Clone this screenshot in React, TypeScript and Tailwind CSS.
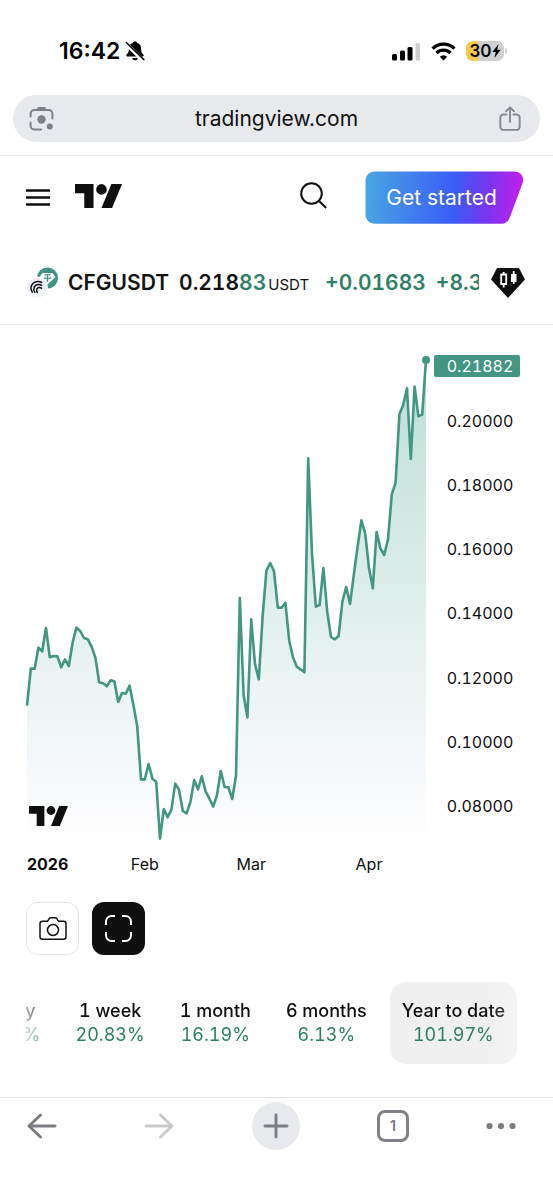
import React from "react";

// Daily closes, as plot heights below the top of the pane (1515 units tall, see viewBox).
const series = [
  1097, 986, 986, 923, 934, 864, 952, 948, 949, 982, 958, 978, 908, 863, 873, 894, 898, 920, 953, 1027, 1030, 1039,
  1021, 1024, 1086, 1059, 1061, 1037, 1095, 1158, 1318, 1318, 1272, 1316, 1325, 1496, 1407, 1432, 1409, 1331, 1349,
  1413, 1420, 1386, 1320, 1348, 1309, 1354, 1376, 1400, 1365, 1293, 1341, 1342, 1377, 1307, 774, 1065, 1132, 838, 972,
  1018, 830, 692, 669, 694, 803, 803, 788, 902, 952, 980, 988, 997, 355, 640, 800, 795, 684, 815, 891, 898, 888, 785,
  741, 792, 705, 620, 541, 580, 685, 745, 576, 625, 645, 598, 463, 428, 223, 195, 145, 357, 140, 229, 224, 60,
];

const lastDay = series.length - 1;
const linePoints = series.map((y, day) => `${day * 10},${y}`).join(" ");
const areaPoints = `0,1515 ${linePoints} ${lastDay * 10},1515`;

const months = [
  { label: "Feb", day: 31 },
  { label: "Mar", day: 59 },
  { label: "Apr", day: 90 },
];

const prices = ["0.20000", "0.18000", "0.16000", "0.14000", "0.12000", "0.10000", "0.08000"];

const ranges = [
  { label: "1 day", change: "8.34%" },
  { label: "1 week", change: "20.83%" },
  { label: "1 month", change: "16.19%" },
  { label: "6 months", change: "6.13%" },
  { label: "Year to date", change: "101.97%", active: true },
];

function BrandMark({ className }: { className: string }) {
  return (
    <svg viewBox="0 4 35.5 18" className={className} fill="#0f0f0f" aria-hidden="true">
      <path d="M14 22H7V11H0V4h14v18ZM28 22h-8l7.5-18h8L28 22Z" />
      <circle cx="20" cy="8" r="4" />
    </svg>
  );
}

function StatusBar() {
  return (
    <div className="flex h-[95px] items-center justify-between pt-[7px] pr-[46px] pl-[59px]">
      <div className="flex items-center gap-[5px]">
        <span className="text-[23px] leading-7 font-semibold text-black">16:42</span>
        <svg viewBox="0 0 20 20" className="h-5 w-5" aria-hidden="true">
          <path
            d="M10 .6c1.5 0 2 .7 2.2 1.3 2.6.8 3.9 2.900 3.900 5.600 0 4 1.200 5 2.400 6.200.5.7.2 1.800-.8 1.800H2.300c-1 0-1.300-1.100-.8-1.800C2.700 12.500 3.900 11.500 3.900 7.500c0-2.700 1.300-4.800 3.900-5.600C8 1.300 8.500.6 10 .6Z"
            fill="#000"
          />
          <path d="M7.200 17h5.600c-.3 1.500-1.400 2.300-2.800 2.300S7.500 18.500 7.200 17Z" fill="#000" />
          <path d="M1 2.400 18.200 19.600" stroke="#fff" strokeWidth="4" />
          <path d="M1.300 1.500 18.900 18.600" stroke="#000" strokeWidth="1.500" strokeLinecap="round" />
        </svg>
      </div>
      <div className="flex items-center gap-[10px]">
        <svg viewBox="0 0 30 19" className="h-[19px] w-[30px]" aria-hidden="true">
          <rect x="1" y="12" width="5" height="6.500" rx="1.500" />
          <rect x="9" y="8.500" width="5" height="10" rx="1.500" />
          <rect x="16.500" y="5" width="5" height="13.500" rx="1.500" />
          <rect x="24.500" y="1" width="4.500" height="17.500" rx="1.500" fill="#cfcfcf" />
        </svg>
        <svg viewBox="0 0 25 19" className="h-[19px] w-[25px]" fill="none" stroke="#000" aria-hidden="true">
          <path d="M1.600 6.600a15.600 15.600 0 0 1 21.800 0" strokeWidth="3.400" />
          <path d="M5.500 11a10 10 0 0 1 14 0" strokeWidth="3.200" />
          <path d="M8.800 14.700a5.300 5.300 0 0 1 7.400 0L12.500 18.400Z" fill="#000" stroke="none" />
        </svg>
        <div className="flex items-center gap-[1px]">
          <div className="flex h-5 w-[38px] items-center justify-center rounded-[7px] bg-linear-to-r from-[#f5c94a] from-32% to-[#cfcfcf] to-32%">
            <span className="text-[17px] leading-5 font-semibold text-black">30</span>
            <svg viewBox="0 0 9 14" className="h-[14px] w-[9px]" aria-hidden="true">
              <path d="M6.600 0 .3 8h3.500L2.400 14 8.700 5.800H5.200Z" />
            </svg>
          </div>
          <div className="h-[6px] w-[2px] rounded-r-full bg-[#cfcfcf]" />
        </div>
      </div>
    </div>
  );
}

function AddressBar() {
  return (
    <div className="border-b border-[#e3e4e6] px-[13px] pb-[13px]">
      <div className="flex h-[47px] items-center justify-between rounded-full bg-[#e8e9ed] pr-[19px] pl-4">
        <button type="button" aria-label="Search with camera">
          <svg viewBox="0 0 25 25" className="h-[25px] w-[25px]" fill="none" stroke="#7f8288" strokeWidth="2">
            <path d="M1.600 10.500V7.600a3.500 3.500 0 0 1 3.500-3.500h14.800a3.500 3.500 0 0 1 3.500 3.500v4.900" strokeLinecap="round" />
            <path d="M1.600 16.500v3.400a3.500 3.500 0 0 0 3.500 3.500h7" strokeLinecap="round" />
            <path d="M8 4.500V2.800C8 1.500 9 1 10 1h5c1 0 2 .5 2 1.800v1.700Z" fill="#7f8288" stroke="none" />
            <circle cx="12.500" cy="13.500" r="4.200" fill="#7f8288" stroke="none" />
            <circle cx="20.800" cy="20.400" r="3" fill="#7f8288" stroke="none" />
          </svg>
        </button>
        <span className="text-[21px] leading-7 text-[#111]">tradingview.com</span>
        <button type="button" aria-label="Share">
          <svg
            viewBox="0 0 22 25"
            className="h-[25px] w-[22px]"
            fill="none"
            stroke="#85878c"
            strokeWidth="1.900"
            strokeLinecap="round"
            strokeLinejoin="round"
          >
            <path d="M7.500 8.500H4.500a3.200 3.200 0 0 0-3.200 3.200v9a3.200 3.200 0 0 0 3.200 3.200h13a3.200 3.200 0 0 0 3.200-3.200v-9a3.200 3.200 0 0 0-3.200-3.200h-3" />
            <path d="M11 16V1.500M7 5.300l4-4 4 4" />
          </svg>
        </button>
      </div>
    </div>
  );
}

function SiteHeader() {
  return (
    <header className="flex items-start justify-between pt-[15px] pr-[29px] pl-[26px]">
      <div className="flex h-[53px] items-center gap-[25px]">
        <button type="button" aria-label="Open menu">
          <svg viewBox="0 0 24 17" className="h-[17px] w-6" stroke="#0f0f0f" strokeWidth="2.400" aria-hidden="true">
            <path d="M0 1.500h24M0 8.500h24M0 15.500h24" />
          </svg>
        </button>
        <a href="#home" aria-label="TradingView" className="pb-[3px]">
          <BrandMark className="h-6 w-[47px]" />
        </a>
      </div>
      <div className="flex h-[53px] items-center gap-[38px]">
        <button type="button" aria-label="Search" className="pb-[5px]">
          <svg viewBox="0 0 27 27" className="h-[27px] w-[27px]" fill="none" stroke="#0f0f0f" strokeWidth="2">
            <circle cx="11.500" cy="11.500" r="10.300" />
            <path d="m18.800 18.800 7.400 7.200" />
          </svg>
        </button>
        <button type="button" className="relative h-[53px] w-[159px]">
          <svg viewBox="0 0 159 53" className="absolute inset-0 h-full w-full" aria-hidden="true">
            <defs>
              <linearGradient id="cta" gradientUnits="userSpaceOnUse" x1="0" y1="20" x2="157" y2="32">
                <stop offset="0" stopColor="#49a6e2" />
                <stop offset=".57" stopColor="#3a5cf8" />
                <stop offset=".78" stopColor="#7935ef" />
                <stop offset="1" stopColor="#c31eec" />
              </linearGradient>
            </defs>
            <path
              d="M10 .5h138.500c7.200 0 11.500 5.500 8.900 12.100L144.900 46.200c-1.600 4.100-4.400 6.600-8.900 6.600H10c-5.500 0-9.500-4-9.500-9.500V10C.5 4.500 4.500.5 10 .5Z"
              fill="url(#cta)"
            />
          </svg>
          <span className="relative block pr-[6px] text-[21px] leading-7 text-white">Get started</span>
        </button>
      </div>
    </header>
  );
}

function SymbolBar() {
  return (
    <section className="flex h-[101px] items-center border-b border-[#e6e6e6] pt-[18px] pr-7 pl-[26px]">
      <svg viewBox="0 0 32 32" className="h-8 w-8 shrink-0" aria-hidden="true">
        <circle cx="21.500" cy="11" r="10.500" fill="#419384" />
        <path d="M16.500 6h10l3 4-8 7.500-8-7.500Z" fill="#fff" />
        <path d="M18.500 7.800h6M21.500 8v7M17.800 10.700c2 1 5.400 1 7.400 0" stroke="#419384" strokeWidth="1.300" fill="none" />
        <circle cx="10.800" cy="20.600" r="11" fill="#fff" />
        <circle cx="10.800" cy="20.600" r="10" fill="#eff0fa" />
        <g fill="none" stroke="#111" strokeWidth="1.500" strokeLinecap="round">
          <path d="M6.300 25.200C3 20.200 6.500 14.500 12 14.500c1.300 0 2.600.3 3.700 1" />
          <path d="M8.900 25.300c-2.600-3.700-.2-7.900 3.700-7.900 1.300 0 2.300.4 3.100 1" />
          <path d="M11.400 25.400c-1.700-2.200-.4-5 1.900-5 .9 0 1.600.3 2.200.8" />
        </g>
      </svg>
      <div className="mr-3 ml-[10px] flex min-w-0 flex-1 items-baseline overflow-hidden pt-0.5 text-[21px] leading-7 font-semibold whitespace-nowrap text-[#131313] tabular-nums">
        <h1>CFGUSDT</h1>
        <span className="ml-[10px]">
          0.218<span className="text-[#2f8069]">83</span>
        </span>
        <span className="ml-0.5 text-[15px] font-normal">USDT</span>
        <span className="ml-4 text-[#2f8069]">+0.01683</span>
        <span className="ml-[10px] text-[#2f8069]">+8.34%</span>
      </div>
      <svg viewBox="0 0 34 30" className="h-[30px] w-[34px] shrink-0" aria-hidden="true">
        <path d="M6 0h22l6 11.500L17 30 0 11.500Z" fill="#0f0f0f" />
        <path d="M10.200 6.500h5v9.500h-5ZM12.700 4v2.500M12.700 16v3.500" fill="none" stroke="#fff" strokeWidth="1.800" />
        <path d="M20 6h5.500v8H20ZM21.800 3h1.800v13h-1.800Z" fill="#fff" />
      </svg>
    </section>
  );
}

function PriceChart() {
  return (
    <section aria-label="Price chart" className="pt-[15px] pr-[33px] pl-[27px]">
      <div className="flex h-[505px]">
        <div className="relative flex-1">
          <svg viewBox={`0 0 ${lastDay * 10} 1515`} preserveAspectRatio="none" className="block h-full w-full overflow-visible">
            <defs>
              <linearGradient id="area" gradientUnits="userSpaceOnUse" x1="0" y1="60" x2="0" y2="1515">
                <stop offset="0" stopColor="#429e88" stopOpacity=".35" />
                <stop offset=".6" stopColor="#429e88" stopOpacity=".13" />
                <stop offset=".85" stopColor="#7aa0c0" stopOpacity=".07" />
                <stop offset="1" stopColor="#a0a8e0" stopOpacity="0" />
              </linearGradient>
            </defs>
            <polygon points={areaPoints} fill="url(#area)" />
            <polyline
              points={linePoints}
              fill="none"
              stroke="#429682"
              strokeWidth="2.600"
              strokeLinejoin="round"
              vectorEffect="non-scaling-stroke"
            />
          </svg>
          <span className="absolute top-4 -right-1 h-2 w-2 rounded-full bg-[#429682]" />
          <BrandMark className="absolute bottom-[19px] left-0.5 h-5 w-[39px]" />
        </div>
        <div className="ml-2 flex w-[86px] flex-col text-center text-[16px] leading-[22px] text-[#0f0f0f] tabular-nums">
          <span className="mt-[15px] rounded-xs bg-[#429682] pl-[6px] text-white">0.21882</span>
          <div className="mt-[33px] flex h-[407px] flex-col justify-between pl-[6px]">
            {prices.map((price) => (
              <span key={price}>{price}</span>
            ))}
          </div>
        </div>
      </div>
      <div className="relative mt-2 mr-[94px] h-[22px] text-[16px] leading-[22px] text-[#0f0f0f]">
        <span className="font-bold">2026</span>
        {months.map(({ label, day }) => (
          <span key={label} className="absolute -translate-x-1/2" style={{ left: `${(day / lastDay) * 100}%` }}>
            {label}
          </span>
        ))}
      </div>
    </section>
  );
}

function ChartActions() {
  return (
    <div className="flex gap-[13px] pt-[27px] pl-[26px]">
      <button
        type="button"
        aria-label="Take a snapshot"
        className="flex h-[53px] w-[53px] items-center justify-center rounded-xl border border-[#e4e4e4]"
      >
        <svg viewBox="0 0 28 24" className="h-6 w-7" fill="none" stroke="#131313" strokeWidth="1.500">
          <path d="M3.500 4.300h5l1.500-2.500c.4-.7.900-1 1.600-1h4.800c.7 0 1.200.3 1.600 1l1.500 2.500h5c1.500 0 2.500 1 2.500 2.500v12.900c0 1.500-1 2.500-2.500 2.500h-21C2 22.200 1 21.200 1 19.700V6.800c0-1.500 1-2.500 2.500-2.500Z" />
          <circle cx="14" cy="13" r="5.500" />
        </svg>
      </button>
      <button
        type="button"
        aria-label="Full chart"
        className="flex h-[53px] w-[53px] items-center justify-center rounded-xl bg-[#0f0f0f]"
      >
        <svg viewBox="0 0 27 27" className="h-[27px] w-[27px]" fill="none" stroke="#fff" strokeWidth="1.900">
          <path d="M1 10V6.500A5.500 5.500 0 0 1 6.500 1H10M17 1h3.500A5.500 5.500 0 0 1 26 6.500V10M26 17v3.500a5.500 5.500 0 0 1-5.500 5.500H17M10 26H6.500A5.500 5.500 0 0 1 1 20.500V17" />
        </svg>
      </button>
    </div>
  );
}

function RangeTabs() {
  return (
    <div className="mt-[27px] mr-9 ml-[26px] flex justify-end gap-[11px] overflow-hidden pb-[33px] tabular-nums [mask-image:linear-gradient(to_right,rgba(0,0,0,0.35),black_44px,black_calc(100%-32px),rgba(0,0,0,0.7))]">
      {ranges.map(({ label, change, active }) => (
        <button
          key={label}
          type="button"
          aria-pressed={!!active}
          className={`flex h-[82px] shrink-0 flex-col items-center justify-center rounded-2xl px-3 text-[18px] leading-6 whitespace-nowrap ${active ? "bg-[#f0f0f0]" : ""}`}
        >
          <span className="font-medium text-[#0f0f0f]">{label}</span>
          <span className="text-[#2f8069]">{change}</span>
        </button>
      ))}
    </div>
  );
}

function BrowserToolbar() {
  return (
    <nav className="flex h-[103px] items-start justify-between border-t border-[#e1e2e5] pt-1 pr-[19px] pl-[18px]">
      <button type="button" aria-label="Back" className="flex h-12 w-12 items-center justify-center">
        <svg viewBox="0 0 30 26" className="h-[26px] w-[30px]" fill="none" stroke="#7b7d83" strokeWidth="2.900" strokeLinecap="round" strokeLinejoin="round">
          <path d="M28 13H2.500M13.500 2 2 13l11.500 11" />
        </svg>
      </button>
      <button type="button" aria-label="Forward" className="flex h-12 w-12 items-center justify-center">
        <svg viewBox="0 0 30 26" className="h-[26px] w-[30px]" fill="none" stroke="#c9c9cb" strokeWidth="2.900" strokeLinecap="round" strokeLinejoin="round">
          <path d="M2 13h25.500M16.500 2 28 13 16.500 24" />
        </svg>
      </button>
      <button type="button" aria-label="New tab" className="flex h-12 w-12 items-center justify-center rounded-full bg-[#e8e9ed]">
        <svg viewBox="0 0 26 26" className="h-[26px] w-[26px]" stroke="#7b7d83" strokeWidth="2.900" strokeLinecap="round">
          <path d="M13 2v22M2 13h22" />
        </svg>
      </button>
      <button type="button" aria-label="Show tabs" className="flex h-12 w-12 items-center justify-center">
        <span className="flex h-8 w-8 items-center justify-center rounded-[8px] border-[3px] border-[#808288] text-[15px] leading-5 font-semibold text-[#7b7d83]">
          1
        </span>
      </button>
      <button type="button" aria-label="More" className="flex h-12 w-12 items-center justify-start">
        <svg viewBox="0 0 30 8" className="h-2 w-[30px]" fill="#7b7d83">
          <circle cx="3.500" cy="4" r="3.100" />
          <circle cx="15" cy="4" r="3.100" />
          <circle cx="26.500" cy="4" r="3.100" />
        </svg>
      </button>
    </nav>
  );
}

export default function App() {
  return (
    <div className="min-h-screen bg-white font-['Inter',sans-serif]">
      <StatusBar />
      <AddressBar />
      <main>
        <SiteHeader />
        <SymbolBar />
        <PriceChart />
        <ChartActions />
        <RangeTabs />
      </main>
      <BrowserToolbar />
    </div>
  );
}
